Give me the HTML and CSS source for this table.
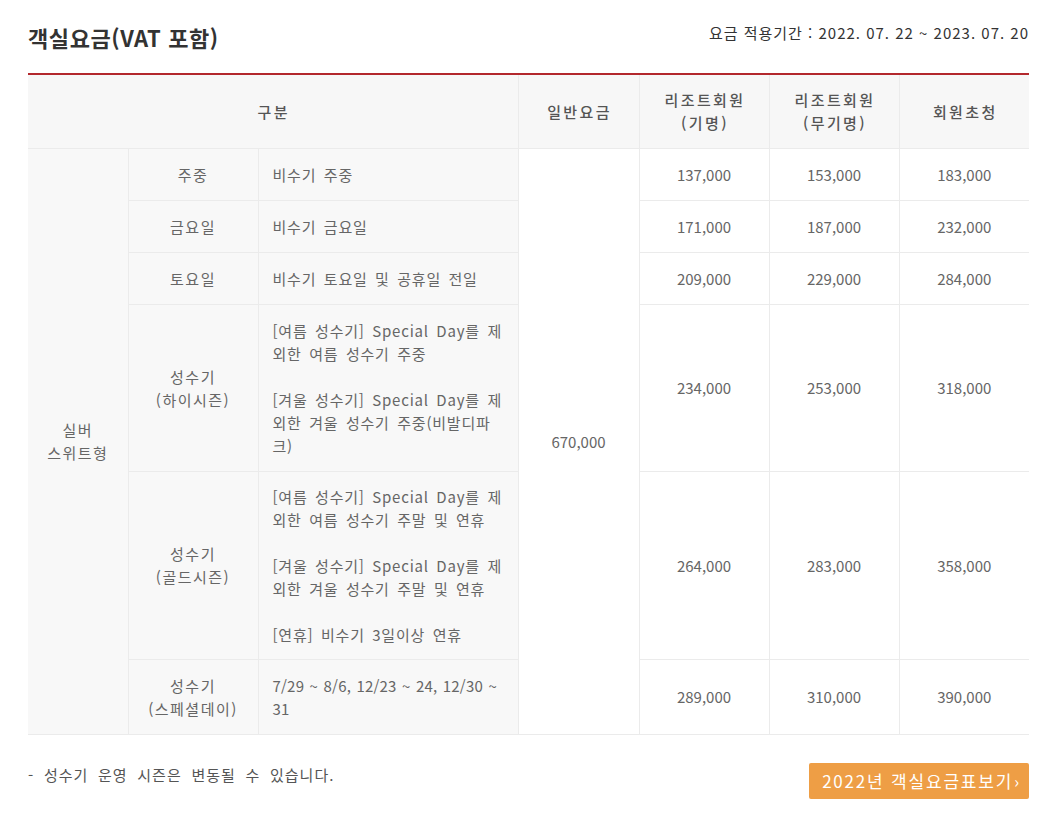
FILE: index.html
```html
<!DOCTYPE html>
<html lang="ko">
<head>
<meta charset="utf-8">
<title>객실요금</title>
<link rel="stylesheet" href="styles.css">
</head>
<body>
<div class="wrap">
  <div class="top">
    <h2 class="title">객실요금(VAT 포함)</h2>
    <p class="period">요금 적용기간 : 2022. 07. 22 ~ 2023. 07. 20</p>
  </div>
  <table class="rate">
    <colgroup>
      <col class="c1"><col class="c2"><col class="c3"><col class="c4"><col class="c5"><col class="c6"><col class="c7">
    </colgroup>
    <thead>
      <tr>
        <th colspan="3">구분</th>
        <th>일반요금</th>
        <th>리조트회원<br>(기명)</th>
        <th>리조트회원<br>(무기명)</th>
        <th class="last">회원초청</th>
      </tr>
    </thead>
    <tbody>
      <tr>
        <td class="gray" rowspan="6">실버<br>스위트형</td>
        <td class="gray">주중</td>
        <td class="gray desc">비수기 주중</td>
        <td class="price" rowspan="6">670,000</td>
        <td class="price">137,000</td>
        <td class="price">153,000</td>
        <td class="price last">183,000</td>
      </tr>
      <tr>
        <td class="gray">금요일</td>
        <td class="gray desc">비수기 금요일</td>
        <td class="price">171,000</td>
        <td class="price">187,000</td>
        <td class="price last">232,000</td>
      </tr>
      <tr>
        <td class="gray">토요일</td>
        <td class="gray desc">비수기 토요일 및 공휴일 전일</td>
        <td class="price">209,000</td>
        <td class="price">229,000</td>
        <td class="price last">284,000</td>
      </tr>
      <tr>
        <td class="gray">성수기<br>(하이시즌)</td>
        <td class="gray desc">[여름 성수기] Special Day를 제<br>외한 여름 성수기 주중<br><br>[겨울 성수기] Special Day를 제<br>외한 겨울 성수기 주중(비발디파<br>크)</td>
        <td class="price">234,000</td>
        <td class="price">253,000</td>
        <td class="price last">318,000</td>
      </tr>
      <tr class="gold">
        <td class="gray">성수기<br>(골드시즌)</td>
        <td class="gray desc">[여름 성수기] Special Day를 제<br>외한 여름 성수기 주말 및 연휴<br><br>[겨울 성수기] Special Day를 제<br>외한 겨울 성수기 주말 및 연휴<br><br>[연휴] 비수기 3일이상 연휴</td>
        <td class="price">264,000</td>
        <td class="price">283,000</td>
        <td class="price last">358,000</td>
      </tr>
      <tr>
        <td class="gray">성수기<br>(스페셜데이)</td>
        <td class="gray desc num">7/29 ~ 8/6, 12/23 ~ 24, 12/30 ~<br>31</td>
        <td class="price">289,000</td>
        <td class="price">310,000</td>
        <td class="price last">390,000</td>
      </tr>
    </tbody>
  </table>
  <div class="foot">
    <p class="note">- 성수기 운영 시즌은 변동될 수 있습니다.</p>
    <a class="btn" href="#">2022년 객실요금표보기<span class="arr">›</span></a>
  </div>
</div>
</body>
</html>
```

FILE: styles.css
```css
* { box-sizing: border-box; }
html, body { margin: 0; padding: 0; background: #fff; }
body {
  font-family: "Noto Sans CJK KR", "Noto Sans", sans-serif;
  color: #666;
}
.wrap {
  width: 1001px;
  margin-left: 28px;
}
.top {
  display: flex;
  justify-content: space-between;
  align-items: flex-start;
  padding-top: 22px;
  height: 73px;
}
.title {
  margin: 0;
  font-size: 22px;
  line-height: 30px;
  font-weight: 700;
  color: #333;
  letter-spacing: 0.6px;
}
.period {
  margin: 1px 0 0;
  font-size: 15px;
  line-height: 20px;
  color: #333;
  letter-spacing: 1px;
}
.rate {
  width: 1001px;
  table-layout: fixed;
  border-collapse: collapse;
  border-top: 2px solid #b3282d;
  font-size: 15px;
  line-height: 23px;
}
.c1 { width: 100px; }
.c2 { width: 130px; }
.c3 { width: 260px; }
.c4 { width: 121px; }
.c5 { width: 130px; }
.c6 { width: 130px; }
.c7 { width: 130px; }
.rate th {
  background: #f7f7f7;
  color: #555;
  font-weight: 500;
  height: 74px;
  padding: 0 0 0 2px;
  text-align: center;
  vertical-align: middle;
  letter-spacing: 2.4px;
  border-right: 1px solid #ebebeb;
  border-bottom: 1px solid #ebebeb;
}
.rate td {
  padding: 14px 0;
  text-align: center;
  vertical-align: middle;
  color: #666;
  border-right: 1px solid #ebebeb;
  border-bottom: 1px solid #ebebeb;
}
.rate .last { border-right: 0; }
.rate td.gray {
  background: #f8f8f8;
  letter-spacing: 1.5px;
}
.rate td.desc {
  text-align: left;
  padding-left: 14px;
  padding-right: 0;
  white-space: nowrap;
  letter-spacing: 0.8px;
  word-spacing: 2.5px;
}
.rate td.num {
  letter-spacing: 0.2px;
  word-spacing: 1px;
}
.rate td.price { background: #fff; }
.rate tr.gold td { padding-top: 13px; padding-bottom: 13px; }
.foot {
  display: flex;
  justify-content: space-between;
  align-items: flex-start;
  margin-top: 28px;
}
.note {
  margin: 0;
  font-size: 15px;
  line-height: 24px;
  color: #555;
  letter-spacing: 1px;
  word-spacing: 4.5px;
}
.btn {
  display: flex;
  align-items: center;
  height: 36px;
  padding: 0 10px 0 13px;
  background: #ee9e45;
  border-radius: 2px;
  color: #fff;
  font-size: 17px;
  letter-spacing: 1.8px;
  text-decoration: none;
}
.arr {
  font-size: 16px;
  margin-left: 1px;
  letter-spacing: 0;
}
```
